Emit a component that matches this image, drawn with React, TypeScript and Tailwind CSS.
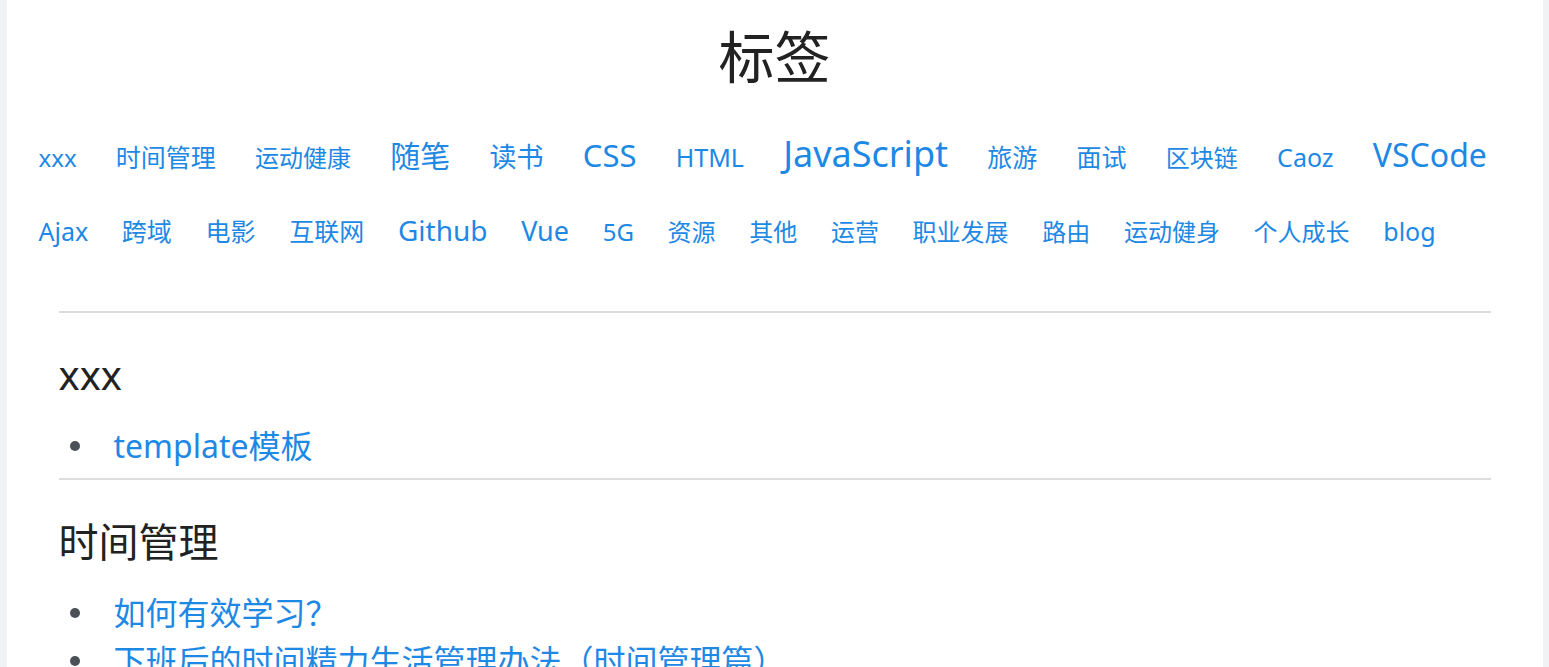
import { Fragment } from "react";

const TAGS: { name: string; size: string }[] = [
  { name: "xxx", size: "text-[24px]" },
  { name: "时间管理", size: "text-[25px]" },
  { name: "运动健康", size: "text-[24px]" },
  { name: "随笔", size: "text-[30px]" },
  { name: "读书", size: "text-[27px]" },
  { name: "CSS", size: "text-[31px]" },
  { name: "HTML", size: "text-[25px]" },
  { name: "JavaScript", size: "text-[36px]" },
  { name: "旅游", size: "text-[25px]" },
  { name: "面试", size: "text-[25px]" },
  { name: "区块链", size: "text-[24px]" },
  { name: "Caoz", size: "text-[25px]" },
  { name: "VSCode", size: "text-[32px]" },
  { name: "Ajax", size: "text-[25px]" },
  { name: "跨域", size: "text-[25px]" },
  { name: "电影", size: "text-[25px]" },
  { name: "互联网", size: "text-[25px]" },
  { name: "Github", size: "text-[28px]" },
  { name: "Vue", size: "text-[27px]" },
  { name: "5G", size: "text-[24px]" },
  { name: "资源", size: "text-[24px]" },
  { name: "其他", size: "text-[24px]" },
  { name: "运营", size: "text-[24px]" },
  { name: "职业发展", size: "text-[24px]" },
  { name: "路由", size: "text-[24px]" },
  { name: "运动健身", size: "text-[24px]" },
  { name: "个人成长", size: "text-[24px]" },
  { name: "blog", size: "text-[25px]" },
];

const SECTIONS: { tag: string; posts: string[] }[] = [
  { tag: "xxx", posts: ["template模板"] },
  {
    tag: "时间管理",
    posts: ["如何有效学习？", "下班后的时间精力生活管理办法（时间管理篇）", "番茄工作法"],
  },
];

export default function App() {
  return (
    <div
      className="h-screen overflow-hidden bg-[#f1f2f4]"
      style={{ fontFamily: '"Noto Sans", "Noto Sans CJK SC", sans-serif' }}
    >
      <div className="mx-auto max-w-[1536px] bg-white min-h-screen">
        {/* 标题 */}
        <h1 className="pt-[28px] text-center text-[56px] leading-none text-[#222]">标签</h1>

        {/* 标签云：两端对齐，最后一行左对齐 */}
        <div className="mt-[30px] pl-[32px] pr-[26px] text-justify text-[16px]">
          {TAGS.map((t) => (
            <Fragment key={t.name}>
              <a href="#" className={`inline-block my-[22px] mr-[29.5px] ${t.size} leading-none text-[#1e88e5]`}>
                {t.name}
              </a>{" "}
            </Fragment>
          ))}
        </div>

        {/* 文章列表 */}
        <div className="mt-[45px] px-[52px]">
          {SECTIONS.map((s) => (
            <section key={s.tag} className="border-t-2 border-[#dddddd] pt-[42px] pb-[8px]">
              <h2 className="text-[40px] leading-none text-[#222]">{s.tag}</h2>
              <ul className="mt-[27px] text-[32px] leading-[48px]">
                {s.posts.map((p) => (
                  <li key={p} className="flex items-center">
                    <span className="ml-[11px] mr-[34px] h-[10px] w-[10px] shrink-0 rounded-full bg-[#4b5058]" />
                    <a href="#" className="text-[#1e88e5] whitespace-nowrap">
                      {p}
                    </a>
                  </li>
                ))}
              </ul>
            </section>
          ))}
        </div>
      </div>
    </div>
  );
}
